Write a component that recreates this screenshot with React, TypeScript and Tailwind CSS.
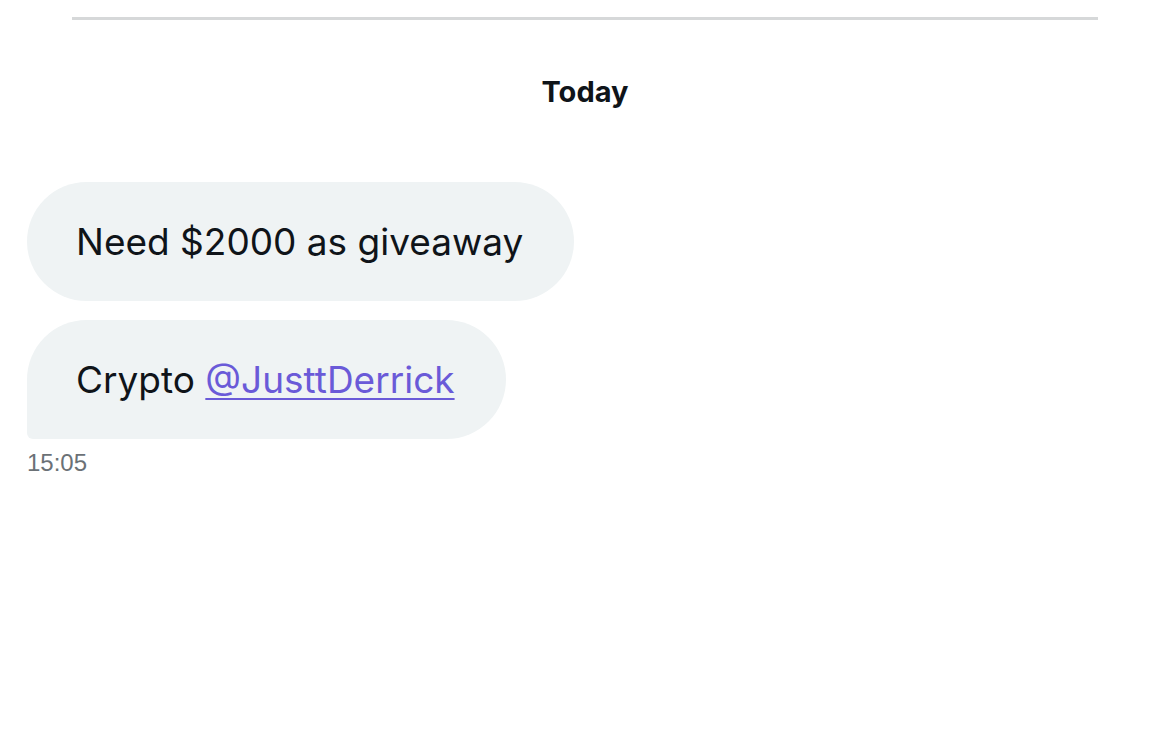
const bubble = 'bg-[#eff3f4] text-[#0f1419] text-[37px] leading-[44px] h-[119px] flex items-center pl-[49px] pr-[51px] rounded-r-[60px]';

const App = () => {
  return (
    <div className="w-[1170px] h-[752px] bg-white font-['Inter',sans-serif] overflow-hidden">
      <div className="pt-[17px] px-[72px]">
        <div className="h-[3px] bg-[#d6d8d9]" />
      </div>
      <div className="mt-[56px] text-center text-[29px] font-bold text-[#0f1419] leading-[32px]">
        Today
      </div>
      <div className="mt-[74px] pl-[27px] flex flex-col items-start gap-[19px]">
        <div className={bubble + ' rounded-l-[60px]'}>Need $2000 as giveaway</div>
        <div className={bubble + ' rounded-tl-[60px] rounded-bl-[6px]'}>
          <span>
            Crypto{' '}
            <a href="#" className="text-[#6a5ad8] underline decoration-2 underline-offset-[5px]">
              @JusttDerrick
            </a>
          </span>
        </div>
      </div>
      <div className="pl-[27px] mt-[10px] text-[24px] leading-[28px] text-[#6b7176] font-['Liberation_Sans',sans-serif]">
        15:05
      </div>
    </div>
  );
};

export default App;
